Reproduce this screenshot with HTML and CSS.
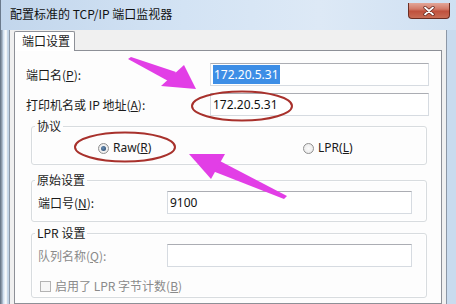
FILE: index.html
```html
<!DOCTYPE html>
<html lang="zh-CN">
<head>
<meta charset="utf-8">
<title>配置标准的 TCP/IP 端口监视器</title>
<link rel="stylesheet" href="styles.css">
</head>
<body>
<div class="window">
  <div class="titlebar">
    <span class="title">配置标准的 TCP/IP 端口监视器</span>
    <button class="close" aria-label="关闭">
      <svg width="16" height="10" viewBox="0 0 16 10"><path d="M4 1.5 L12 8.5 M12 1.5 L4 8.5" stroke="#5a1e16" stroke-width="3.2" stroke-linecap="round"/><path d="M4 1.5 L12 8.5 M12 1.5 L4 8.5" stroke="#fff" stroke-width="1.8" stroke-linecap="round"/></svg>
    </button>
  </div>
  <div class="frame">
    <div class="client">
      <div class="tabs"><div class="tab">端口设置</div></div>
      <div class="panel">
        <div class="row row-first">
          <span class="label">端口名(<u>P</u>):</span>
          <div class="input"><span class="sel">172.20.5.31</span></div>
        </div>
        <div class="row row-second">
          <span class="label">打印机名或 IP 地址(<u>A</u>):</span>
          <div class="input">172.20.5.31</div>
        </div>
        <fieldset class="group group-proto">
          <legend>协议</legend>
          <div class="radios">
            <label class="radio-item raw"><span class="radio checked"></span>Raw(<u>R</u>)</label>
            <label class="radio-item"><span class="radio"></span>LPR(<u>L</u>)</label>
          </div>
        </fieldset>
        <fieldset class="group group-raw">
          <legend>原始设置</legend>
          <div class="grow">
            <span class="glabel">端口号(<u>N</u>):</span>
            <div class="input input-short">9100</div>
          </div>
        </fieldset>
        <fieldset class="group group-lpr">
          <legend>LPR 设置</legend>
          <div class="grow grow-lpr">
            <span class="glabel disabled">队列名称(<u>Q</u>):</span>
            <div class="input input-short"></div>
          </div>
          <div class="check-row">
            <span class="checkbox"></span><span class="disabled">启用了 LPR 字节计数(<u>B</u>)</span>
          </div>
        </fieldset>
      </div>
    </div>
  </div>
  <svg class="marks" width="456" height="304" viewBox="0 0 456 304">
    <ellipse cx="242" cy="106" rx="50" ry="14.5" fill="none" stroke="#a8312c" stroke-width="2"/>
    <ellipse cx="125" cy="147" rx="50" ry="14.5" fill="none" stroke="#a8312c" stroke-width="2"/>
    <polygon points="128,59 131,57 176,72 170,82" fill="#e23ee6"/>
    <polygon points="196,89 161,86 184,65" fill="#e23ee6"/>
    <polygon points="287,196 284,199 210,170 218,160" fill="#e23ee6"/>
    <polygon points="189,154 225,154 211,179" fill="#e23ee6"/>
  </svg>
</div>
</body>
</html>
```
FILE: styles.css
```css
* { box-sizing: border-box; }
html, body { margin: 0; padding: 0; }
body {
  width: 456px;
  height: 304px;
  overflow: hidden;
  font-family: "Noto Sans CJK SC", "Noto Sans", sans-serif;
  font-size: 12px;
  color: #1b1b1b;
}
u { text-decoration: underline; text-underline-offset: 1px; }

.window {
  position: relative;
  width: 456px;
  height: 304px;
  display: flex;
  flex-direction: column;
  background: linear-gradient(90deg, #c2d6ec 0%, #d3e3f4 40%, #dde9f6 70%, #cfe0f2 100%);
  border-left: 1px solid #6b7a8c;
}

.titlebar {
  height: 30px;
  display: flex;
  align-items: flex-start;
  padding-left: 9px;
  flex: none;
}
.title {
  margin-top: 6px;
  line-height: 16px;
  color: #111;
}
.close {
  margin-left: auto;
  margin-right: 6px;
  margin-top: 3px;
  width: 42px;
  height: 16px;
  padding: 0;
  border: 1px solid #6b2d22;
  border-top: none;
  border-radius: 0 0 4px 4px;
  background: linear-gradient(180deg, #e3a698 0%, #d27a68 40%, #c0513d 55%, #c86c55 100%);
  display: flex;
  align-items: center;
  justify-content: center;
}

.frame {
  flex: 1;
  display: flex;
  padding: 0 9px 0 8px;
  background: linear-gradient(90deg, #8b98a8 0px, #8b98a8 1px, #c9dbee 2px, #ffffff 5px, #b7cbe0 7px, #c9dbee 8px, #c9dbee 100%);
}
.client {
  flex: 1;
  background: #f0f0f0;
  border-left: 1px solid #8c97a6;
  border-right: 1px solid #8c97a6;
  padding: 1px 4px 0 4px;
  display: flex;
  flex-direction: column;
}

.tabs {
  display: flex;
  height: 19px;
}
.tab {
  position: relative;
  z-index: 1;
  width: 61px;
  height: 20px;
  background: #fff;
  border: 1px solid #8d9097;
  border-bottom: none;
  border-radius: 2px 2px 0 0;
  padding-left: 7px;
  line-height: 18px;
}

.panel {
  flex: 1;
  background: #fdfdfd;
  border: 1px solid #8d9097;
  padding-left: 11px;
  display: flex;
  flex-direction: column;
}

.row {
  display: flex;
  align-items: center;
  height: 23px;
}
.row-first { margin-top: 12px; }
.row-second { margin-top: 7px; }
.label {
  width: 184px;
  line-height: 16px;
}
.input {
  width: 219px;
  height: 23px;
  background: #fff;
  border: 1px solid #d6dbe1;
  border-top-color: #abadb3;
  padding-left: 2px;
  line-height: 21px;
  font-family: "Noto Sans", "Noto Sans CJK SC", sans-serif;
  color: #111;
}
.sel {
  background: #3d8ee6;
  color: #fff;
  padding: 1px 1px;
}

.group {
  margin: 0 0 0 5px;
  width: 396px;
  padding: 0;
  border: 1px solid #d8dcdf;
  border-radius: 3px;
  box-shadow: inset 0 0 0 1px #ffffff;
  min-width: 0;
}
.group legend {
  margin-left: 3px;
  padding: 0 2px;
  line-height: 16px;
}
.group-proto { margin-top: 2px; }
.group-raw { margin-top: 7px; }
.group-lpr { margin-top: 3px; }

.radios {
  display: flex;
  align-items: center;
  height: 28px;
  margin-bottom: 2px;
  padding-left: 66px;
}
.radio-item {
  display: flex;
  align-items: center;
  line-height: 16px;
  font-family: "Noto Sans", sans-serif;
}
.raw { width: 205px; }
.radio {
  width: 11px;
  height: 11px;
  border-radius: 50%;
  border: 1px solid #8f8f8f;
  background: radial-gradient(circle, #fbfbfb 0, #e6e6e6 100%);
  margin-right: 4px;
  display: flex;
  align-items: center;
  justify-content: center;
}
.radio.checked::after {
  content: "";
  width: 5px;
  height: 5px;
  border-radius: 50%;
  background: radial-gradient(circle at 40% 40%, #6a8fb4 0, #1f3f66 100%);
}

.grow {
  display: flex;
  align-items: center;
  height: 23px;
  margin-top: 3px;
  margin-bottom: 7px;
  padding-left: 6px;
}
.grow-lpr { margin-bottom: 0; }
.glabel {
  width: 129px;
  line-height: 16px;
}
.input-short { width: 245px; }
.disabled { color: #8a8a8a; }

.check-row {
  display: flex;
  align-items: center;
  height: 16px;
  margin-top: 11px;
  margin-bottom: 3px;
  padding-left: 8px;
  line-height: 16px;
}
.checkbox {
  width: 11px;
  height: 11px;
  border: 1px solid #b3b3b3;
  background: #f6f6f6;
  margin-right: 4px;
}

.marks {
  position: absolute;
  left: -1px;
  top: 0;
  pointer-events: none;
}
```
